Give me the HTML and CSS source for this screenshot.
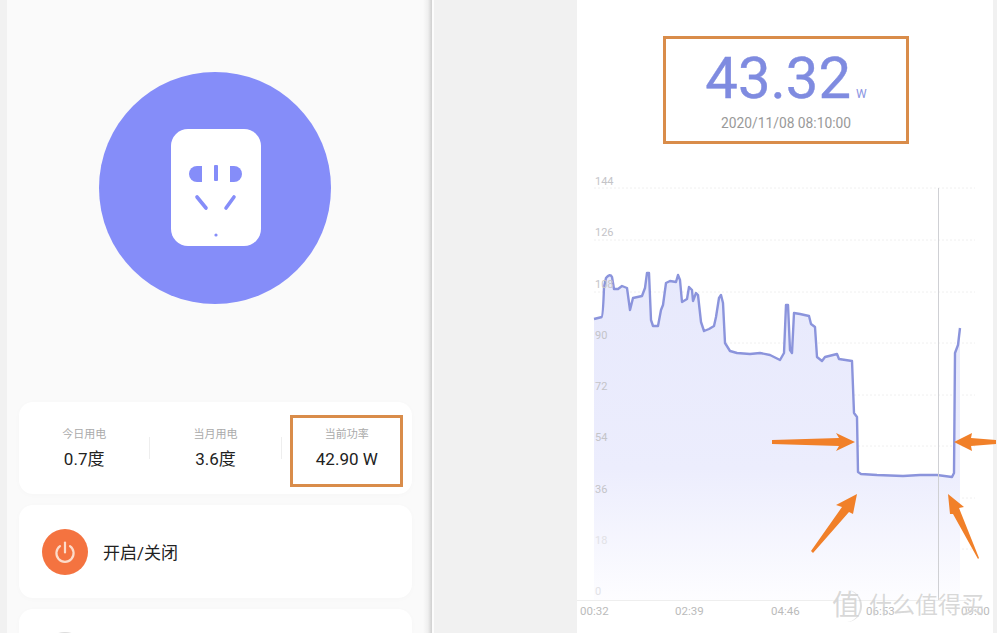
FILE: index.html
```html
<!DOCTYPE html>
<html lang="zh-CN">

<head>
    <meta charset="UTF-8">
    <title>插座功率</title>
    <link rel="stylesheet" href="styles.css">
</head>

<body>
    <!-- Left phone: socket home page -->
    <div class="phone-left">
        <svg class="socket" viewBox="99 72 232 232" width="232" height="232">
            <circle cx="215" cy="188" r="116" fill="#858df9" />
            <rect x="171" y="129" width="90" height="117" rx="17" fill="#fff" />
            <path d="M202 166h-5a8 8 0 0 0 0 16h5z" fill="#858df9" />
            <path d="M230 166h4a8 8 0 0 1 0 16h-4z" fill="#858df9" />
            <rect x="214" y="165" width="4" height="16" rx="1" fill="#858df9" />
            <path d="M197 197l9 11M234 197l-8 11" stroke="#858df9" stroke-width="3.6" stroke-linecap="round" />
            <circle cx="216" cy="235" r="1.6" fill="#858df9" />
        </svg>

        <div class="card stats">
            <div class="stat">
                <div class="stat-label">今日用电</div>
                <div class="stat-value">0.7度</div>
            </div>
            <div class="stat-line"></div>
            <div class="stat">
                <div class="stat-label">当月用电</div>
                <div class="stat-value">3.6度</div>
            </div>
            <div class="stat-line"></div>
            <div class="stat">
                <div class="stat-label">当前功率</div>
                <div class="stat-value">42.90 W</div>
            </div>
            <div class="mark-box"></div>
        </div>

        <div class="card switch">
            <div class="power-btn">
                <svg viewBox="0 0 24 24" width="24" height="24" fill="none" stroke="#fcdccb" stroke-width="2.2" stroke-linecap="round">
                    <path d="M7 6.2a8.6 8.6 0 1 0 10 0" />
                    <path d="M12 2.5v10" />
                </svg>
            </div>
            <span>开启/关闭</span>
        </div>

        <div class="card next">
            <div class="next-icon"></div>
        </div>
    </div>

    <div class="gutter-light"></div>
    <div class="gutter-line"></div>
    <div class="gutter-gray"></div>

    <!-- Right phone: power curve -->
    <div class="phone-right">
        <div class="reading">
            <div class="reading-top">
                <span class="reading-num">43.32</span><span class="reading-unit">W</span>
            </div>
            <div class="reading-time">2020/11/08 08:10:00</div>
        </div>

        <svg class="chart" viewBox="577 170 416 463" width="416" height="463">
            <defs>
                <linearGradient id="area" x1="0" y1="270" x2="0" y2="600" gradientUnits="userSpaceOnUse">
                    <stop offset="0" stop-color="#e7e9fc" />
                    <stop offset="0.6" stop-color="#ecedfd" />
                    <stop offset="1" stop-color="#fdfdff" />
                </linearGradient>
            </defs>
            <path class="grid" d="M594 188H975M594 240H975M594 292H975M594 343H975M594 395H975M594 446H975M594 498H975M594 549H975" />
            <path d="M594 600V319L602 317Q603 317 604 287L606 278Q610 273 612 277L614 289H618L622 286L627 288L630 310L633 298L642 296L645 288L647 273H649L651 320L653 326H658L661 310L663 305L666 283L670 281L676 282L678 275L680 280L682 302L687 299L689 287L692 290L693 301L696 293L698 295L701 322L704 331L709 329L714 326L716 317L719 298L721 295L723 303L725 343L730 351L737 353L750 354L760 353L770 355L780 360L784 353L786 305H788L790 350L792 353L794 313L800 314L809 316L811 324L815 327L817 357L822 361L825 357L837 354L839 359L852 361L854 413L857 417L858 472L861 474L877 475L903 476L920 475L937 475L952 477L954 473L955 353L958 345L960 328V600Z" fill="url(#area)" />
            <path class="line" d="M594 319L602 317Q603 317 604 287L606 278Q610 273 612 277L614 289H618L622 286L627 288L630 310L633 298L642 296L645 288L647 273H649L651 320L653 326H658L661 310L663 305L666 283L670 281L676 282L678 275L680 280L682 302L687 299L689 287L692 290L693 301L696 293L698 295L701 322L704 331L709 329L714 326L716 317L719 298L721 295L723 303L725 343L730 351L737 353L750 354L760 353L770 355L780 360L784 353L786 305H788L790 350L792 353L794 313L800 314L809 316L811 324L815 327L817 357L822 361L825 357L837 354L839 359L852 361L854 413L857 417L858 472L861 474L877 475L903 476L920 475L937 475L952 477L954 473L955 353L958 345L960 328" />
            <path class="axis" d="M577 600.5H975" />
            <path class="cursor" d="M938.5 188V600" />
            <text class="y-label" x="595" y="185">144</text>
            <text class="y-label" x="595" y="236">126</text>
            <text class="y-label" x="595" y="288">108</text>
            <text class="y-label" x="595" y="339">90</text>
            <text class="y-label" x="595" y="390">72</text>
            <text class="y-label" x="595" y="441">54</text>
            <text class="y-label" x="595" y="493">36</text>
            <text class="y-label light" x="595" y="544">18</text>
            <text class="y-label light" x="595" y="595">0</text>
            <text class="x-label" x="580" y="615">00:32</text>
            <text class="x-label" x="675" y="615">02:39</text>
            <text class="x-label" x="771" y="615">04:46</text>
            <text class="x-label" x="866" y="615">06:53</text>
            <text class="x-label" x="961" y="615">09:00</text>
        </svg>
    </div>
    <div class="gutter-end"></div>

    <!-- Annotations on top of the screenshots -->
    <svg class="arrows" viewBox="0 0 997 633" width="997" height="633">
        <polygon points="772,440 839,438 836,433 855,442 836,451 839,446 772,444" />
        <polygon points="996,440 971,438 972,433 954,442 972,451 971,446 996,444" />
        <polygon points="811,551 842,507 836,505 857,494 853,514 849,512 813,553" />
        <polygon points="978,559 953,514 950,514 948,494 964,507 959,508 979,558" />
    </svg>

    <div class="watermark">
        <span class="watermark-mark">值</span>
        <span>什么值得买</span>
    </div>
</body>

</html>
```

FILE: styles.css
```css
* {
    box-sizing: border-box;
}

body {
    margin: 0;
    width: 997px;
    height: 633px;
    overflow: hidden;
    position: relative;
    display: flex;
    background: #f1f1f1;
    font-family: Roboto, "Noto Sans CJK SC", sans-serif;
}

.phone-left {
    width: 416px;
    height: 633px;
    margin-left: 7px;
    padding: 72px 11px 0 12px;
    background: #fafafa;
    flex-shrink: 0;
    overflow: hidden;
}

.socket {
    display: block;
    margin: 0 0 98px 80px;
}

.card {
    background: #fff;
    border-radius: 14px;
    width: 393px;
    height: 92px;
    margin-bottom: 11px;
    box-shadow: 0 1px 6px rgba(0, 0, 0, 0.02);
}

.stats {
    position: relative;
    display: flex;
    align-items: center;
}

.stat {
    flex: 1;
    text-align: center;
    padding-top: 2px;
}

.stat-label {
    font-size: 11px;
    line-height: 16px;
    color: #aaa;
}

.stat-value {
    font-size: 17px;
    line-height: 24px;
    margin-top: 4px;
    color: #222;
}

.stat-line {
    width: 1px;
    height: 22px;
    background: #eee;
}

.mark-box {
    position: absolute;
    left: 271px;
    top: 13px;
    width: 113px;
    height: 72px;
    border: 3px solid #d98c4a;
}

.switch {
    display: flex;
    align-items: center;
    gap: 15px;
    height: 93px;
    padding-left: 23px;
    font-size: 17px;
    color: #222;
}

.power-btn {
    width: 46px;
    height: 46px;
    border-radius: 50%;
    background: #f47340;
    display: flex;
    align-items: center;
    justify-content: center;
}

.next {
    padding: 23px 0 0 23px;
    height: 24px;
    margin-bottom: 0;
    border-radius: 14px 14px 0 0;
    overflow: hidden;
}

.next-icon {
    width: 46px;
    height: 46px;
    border-radius: 50%;
    background: #dcdcdc;
}

.gutter-light {
    width: 9px;
    background: linear-gradient(to right, #fafafa, #efefef 55%, #cfcfcf);
    flex-shrink: 0;
}

.gutter-line {
    width: 2px;
    background: #fcfcfc;
    flex-shrink: 0;
}

.gutter-gray {
    width: 143px;
    background: #f1f1f1;
    flex-shrink: 0;
}

.gutter-end {
    flex: 1;
    background: #f1f1f1;
}

.phone-right {
    width: 416px;
    height: 633px;
    padding-top: 36px;
    background: #fff;
    flex-shrink: 0;
}

.reading {
    width: 246px;
    height: 108px;
    margin-left: 86px;
    border: 3px solid #d98c4a;
    text-align: center;
}

.reading-top {
    display: flex;
    justify-content: center;
    align-items: baseline;
    height: 67px;
    padding-top: 3px;
}

.reading-num {
    font-size: 58px;
    line-height: 72px;
    color: #7f8be0;
    -webkit-text-stroke: 0.4px #7f8be0;
}

.reading-unit {
    font-size: 12px;
    margin-left: 5px;
    color: #8a94e2;
}

.reading-time {
    font-size: 13.8px;
    line-height: 16px;
    margin-top: 9px;
    color: #999;
}

.chart {
    display: block;
    margin-top: 26px;
}

.grid {
    fill: none;
    stroke: #f0f0f0;
    stroke-dasharray: 2 2;
}

.line {
    fill: none;
    stroke: #8b94dc;
    stroke-width: 2.4;
    stroke-linejoin: round;
}

.axis {
    stroke: #eee;
}

.cursor {
    stroke: #cfd0d4;
}

.y-label {
    font-size: 11px;
    fill: #c4c4c8;
}

.y-label.light {
    fill: #e2e2e6;
}

.x-label {
    font-size: 11.5px;
    fill: #bbb;
}

.arrows {
    position: absolute;
    left: 0;
    top: 0;
    fill: #f18029;
}

.watermark {
    position: absolute;
    left: 832px;
    top: 590px;
    display: flex;
    align-items: center;
    gap: 7px;
    font-size: 23px;
    line-height: 32px;
    color: rgba(190, 190, 190, 0.6);
    text-shadow: 0 0 2px #fff;
}

.watermark-mark {
    width: 30px;
    height: 32px;
    font-size: 28px;
    border-radius: 50%;
    border-right: 2px solid rgba(200, 200, 200, 0.6);
    text-align: center;
}
```
